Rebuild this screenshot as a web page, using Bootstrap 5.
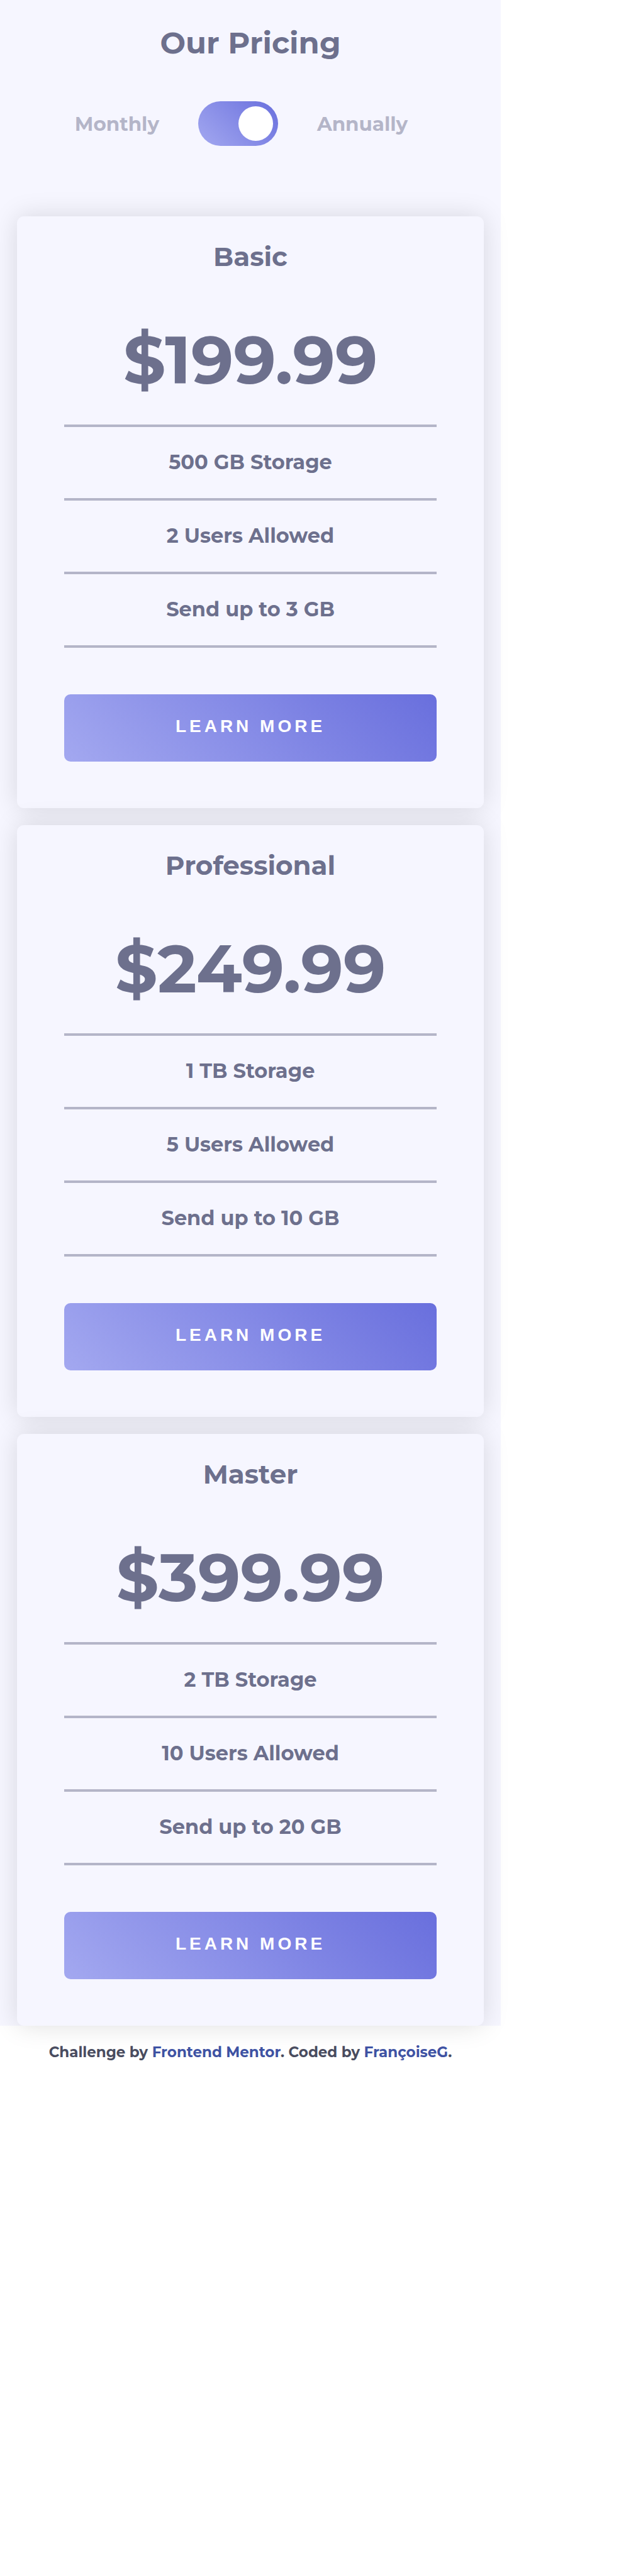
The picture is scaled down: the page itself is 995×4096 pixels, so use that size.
<!DOCTYPE html>
<html lang="en">
<head>
<meta charset="utf-8">
<meta name="viewport" content="width=device-width, initial-scale=1">
<title>Our Pricing</title>
<link href="https://cdn.jsdelivr.net/npm/bootstrap@5.3.0/dist/css/bootstrap.min.css" rel="stylesheet">
<style>
  :root {
    --ink: #6d708d;
    --muted: #b4b5c8;
    --surface: #f6f6ff;
    --brand: linear-gradient(45deg, #a3a8f0, #696fdd);
  }
  body { background: #fff; color: var(--ink); font-family: Montserrat, Inter, sans-serif; font-weight: 700; }
  .page { width: 80%; }
  .pricing { background: var(--surface); }
  .pricing-head { padding-top: 38px; padding-bottom: 112px; }
  .pricing-title { font-size: 48px; line-height: 60px; font-weight: 700; }
  .billing { gap: 62px; margin-top: 63px; padding-right: 29px; color: var(--muted); font-size: 31px; line-height: 40px; }
  .billing-toggle { appearance: none; width: 127px; height: 71px; padding: 8px; border-radius: 36px; background: var(--brand); cursor: pointer; }
  .billing-toggle::before { content: ""; width: 55px; height: 55px; border-radius: 50%; background: #fff; }
  .billing-toggle:checked { justify-content: flex-end; }
  .plans { gap: 27px; padding: 0 27px; }
  .plan { background: var(--surface); color: var(--ink); border-radius: 11px; box-shadow: 0 0 42px rgba(0, 0, 0, .13); padding: 38px 75px 74px; }
  .plan-name { font-size: 42px; line-height: 52px; font-weight: 700; }
  .plan-price { font-size: 106px; line-height: 128px; margin-top: 74px; margin-bottom: 39px; }
  .plan-features { border-top: 4px solid var(--muted); font-size: 32px; line-height: 111px; margin-bottom: 74px; }
  .plan-features li { border-bottom: 4px solid var(--muted); padding-bottom: 2px; }
  .plan-btn { background: var(--brand); color: #fff; border-radius: 10px; height: 107px; padding: 0 0 6px; font-family: "Liberation Sans", sans-serif; font-size: 28px; font-weight: 700; letter-spacing: 5px; }
  .plan-btn:hover { color: #fff; filter: brightness(1.06); }
  .credits { color: #494c5f; font-size: 23px; line-height: 28px; padding-top: 28px; }
  .credits a { color: #3e52a3; }
</style>
</head>
<body>
<div class="page">
  <main class="pricing">
    <header class="pricing-head text-center">
      <h1 class="pricing-title m-0">Our Pricing</h1>
      <div class="billing d-flex justify-content-center align-items-center">
        <label for="billing">Monthly</label>
        <input class="billing-toggle d-flex m-0" type="checkbox" role="switch" id="billing" checked>
        <label for="billing">Annually</label>
      </div>
    </header>
    <div class="plans d-flex flex-column">
      <section class="plan text-center">
        <h2 class="plan-name m-0">Basic</h2>
        <p class="plan-price">$199.99</p>
        <ul class="plan-features list-unstyled">
          <li>500 GB Storage</li>
          <li>2 Users Allowed</li>
          <li>Send up to 3 GB</li>
        </ul>
        <button class="plan-btn btn border-0 w-100 d-block" type="button">LEARN MORE</button>
      </section>
      <section class="plan text-center">
        <h2 class="plan-name m-0">Professional</h2>
        <p class="plan-price">$249.99</p>
        <ul class="plan-features list-unstyled">
          <li>1 TB Storage</li>
          <li>5 Users Allowed</li>
          <li>Send up to 10 GB</li>
        </ul>
        <button class="plan-btn btn border-0 w-100 d-block" type="button">LEARN MORE</button>
      </section>
      <section class="plan text-center">
        <h2 class="plan-name m-0">Master</h2>
        <p class="plan-price">$399.99</p>
        <ul class="plan-features list-unstyled">
          <li>2 TB Storage</li>
          <li>10 Users Allowed</li>
          <li>Send up to 20 GB</li>
        </ul>
        <button class="plan-btn btn border-0 w-100 d-block" type="button">LEARN MORE</button>
      </section>
    </div>
  </main>
  <footer class="credits text-center">
    Challenge by <a class="text-decoration-none" href="#">Frontend Mentor</a>. Coded by <a class="text-decoration-none" href="#">FrançoiseG</a>.
  </footer>
</div>
<script src="https://cdn.jsdelivr.net/npm/bootstrap@5.3.0/dist/js/bootstrap.bundle.min.js"></script>
</body>
</html>
